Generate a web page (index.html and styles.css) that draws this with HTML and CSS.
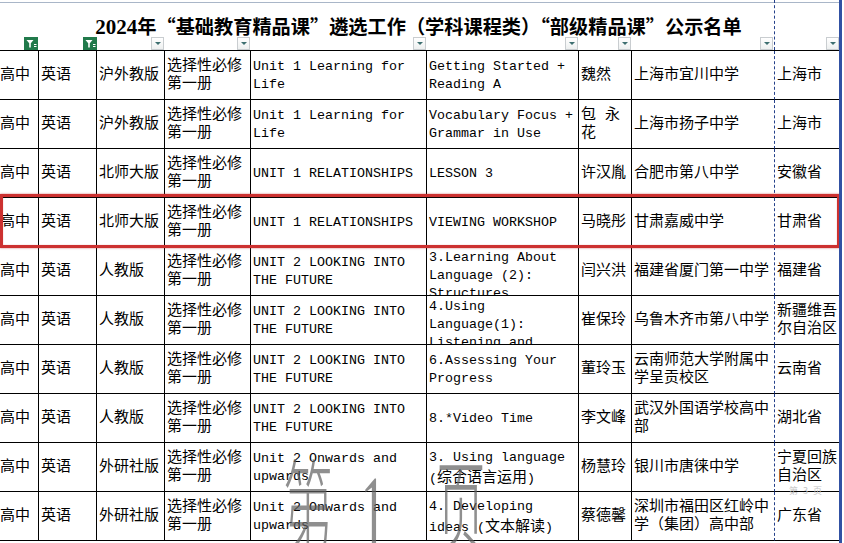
FILE: index.html
```html
<!DOCTYPE html>
<html lang="zh-CN">
<head>
<meta charset="utf-8">
<title>公示名单</title>
<link rel="stylesheet" href="styles.css">
</head>
<body>
<div class="sheet">
  <div class="head">
    <div class="title"><span class="yr">2024</span>年<span class="q">“</span>基础教育精品课<span class="q">”</span>遴选工作（学科课程类）<span class="q">“</span>部级精品课<span class="q">”</span>公示名单</div>
    <div class="hc"><svg class="flt" width="14" height="13" viewBox="0 0 14 13"><rect width="14" height="13" fill="#217a4b"/><polygon points="2.5,3 9.5,3 6.8,6.3 6.8,10.5 5.2,10.5 5.2,6.3" fill="#fff"/><rect x="10" y="7" width="2.5" height="1" fill="#fff"/><rect x="10" y="9" width="2.5" height="1" fill="#fff"/></svg></div>
    <div class="hc"><svg class="flt" width="14" height="13" viewBox="0 0 14 13"><rect width="14" height="13" fill="#217a4b"/><polygon points="2.5,3 9.5,3 6.8,6.3 6.8,10.5 5.2,10.5 5.2,6.3" fill="#fff"/><rect x="10" y="7" width="2.5" height="1" fill="#fff"/><rect x="10" y="9" width="2.5" height="1" fill="#fff"/></svg></div>
    <div class="hc"><span class="dd"></span></div>
    <div class="hc"><span class="dd"></span></div>
    <div class="hc"><span class="dd"></span></div>
    <div class="hc"><span class="dd"></span></div>
    <div class="hc"><span class="dd"></span></div>
    <div class="hc"><span class="dd"></span></div>
    <div class="hc"><span class="dd"></span></div>
  </div>
  <div class="grid">
    <div class="c">高中</div><div class="c">英语</div><div class="c">沪外教版</div><div class="c">选择性必修第一册</div><div class="c en">Unit 1 Learning for Life</div><div class="c en">Getting Started + Reading A</div><div class="c">魏然</div><div class="c">上海市宜川中学</div><div class="c">上海市</div>

    <div class="c">高中</div><div class="c">英语</div><div class="c">沪外教版</div><div class="c">选择性必修第一册</div><div class="c en">Unit 1 Learning for Life</div><div class="c en">Vocabulary Focus + Grammar in Use</div><div class="c">包 永花</div><div class="c">上海市扬子中学</div><div class="c">上海市</div>

    <div class="c">高中</div><div class="c">英语</div><div class="c">北师大版</div><div class="c">选择性必修第一册</div><div class="c en">UNIT 1 RELATIONSHIPS</div><div class="c en">LESSON 3</div><div class="c">许汉胤</div><div class="c">合肥市第八中学</div><div class="c">安徽省</div>

    <div class="c">高中</div><div class="c">英语</div><div class="c">北师大版</div><div class="c">选择性必修第一册</div><div class="c en">UNIT 1 RELATIONSHIPS</div><div class="c en">VIEWING WORKSHOP</div><div class="c">马晓彤</div><div class="c">甘肃嘉威中学</div><div class="c">甘肃省</div>

    <div class="c">高中</div><div class="c">英语</div><div class="c">人教版</div><div class="c">选择性必修第一册</div><div class="c en">UNIT 2 LOOKING INTO THE FUTURE</div><div class="c en top">3.Learning About Language (2): Structures</div><div class="c">闫兴洪</div><div class="c">福建省厦门第一中学</div><div class="c">福建省</div>

    <div class="c">高中</div><div class="c">英语</div><div class="c">人教版</div><div class="c">选择性必修第一册</div><div class="c en">UNIT 2 LOOKING INTO THE FUTURE</div><div class="c en top">4.Using Language(1): Listening and Speaking</div><div class="c">崔保玲</div><div class="c">乌鲁木齐市第八中学</div><div class="c">新疆维吾尔自治区</div>

    <div class="c">高中</div><div class="c">英语</div><div class="c">人教版</div><div class="c">选择性必修第一册</div><div class="c en">UNIT 2 LOOKING INTO THE FUTURE</div><div class="c en">6.Assessing Your Progress</div><div class="c">董玲玉</div><div class="c">云南师范大学附属中学呈贡校区</div><div class="c">云南省</div>

    <div class="c">高中</div><div class="c">英语</div><div class="c">人教版</div><div class="c">选择性必修第一册</div><div class="c en">UNIT 2 LOOKING INTO THE FUTURE</div><div class="c en">8.*Video Time</div><div class="c">李文峰</div><div class="c">武汉外国语学校高中部</div><div class="c">湖北省</div>

    <div class="c">高中</div><div class="c">英语</div><div class="c">外研社版</div><div class="c">选择性必修第一册</div><div class="c en">Unit 2 Onwards and upwards</div><div class="c en"><span>3. Using language (<span class="cj">综合语言运用</span>)</span></div><div class="c">杨慧玲</div><div class="c">银川市唐徕中学</div><div class="c">宁夏回族自治区</div>

    <div class="c">高中</div><div class="c">英语</div><div class="c">外研社版</div><div class="c">选择性必修第一册</div><div class="c en">Unit 2 Onwards and upwards</div><div class="c en"><span>4. Developing ideas (<span class="cj">文本解读</span>)</span></div><div class="c">蔡德馨</div><div class="c">深圳市福田区红岭中学（集团）高中部</div><div class="c">广东省</div>
  </div>
  <div class="hl"></div>
  <div class="wm"><span class="w1">第</span><span class="w2">1</span><span class="w3">页</span></div>
  <div class="wm2">第 3 页</div>
</div>
</body>
</html>
```
FILE: styles.css
```css
* { box-sizing: border-box; }
html, body { margin: 0; padding: 0; background: #fff; overflow: hidden; }
body { width: 844px; height: 543px; color: #000; }

.sheet {
  position: relative;
  width: 842px;
  height: 543px;
  border-right: 3px solid #3151a3;
  overflow: hidden;
}

.head {
  display: grid;
  grid-template-columns: 39px 58px 68px 86px 176px 152px 53px 143px 64px;
  height: 50px;
  background: linear-gradient(#fff 0 2px, #a9b6c8 2px 3px, #fff 3px);
}
.title {
  grid-column: 1 / -1;
  grid-row: 1;
  align-self: start;
  padding-top: 15px;
  text-align: center;
  font-family: "Liberation Serif", "Noto Sans CJK SC", serif;
  font-weight: 700;
  font-size: 19.2px;
  line-height: 22px;
  white-space: nowrap;
  padding-right: 2px;
}
.title .yr { font-size: 21px; }
.title .q { font-family: "Noto Sans CJK SC", sans-serif; }

.hc {
  grid-row: 1;
  display: flex;
  align-items: flex-end;
  justify-content: flex-end;
  padding-right: 1px;
}
.hc:nth-child(2) { grid-column: 1; }
.hc:nth-child(3) { grid-column: 2; padding-right: 0; }
.hc:nth-child(4) { grid-column: 3; }
.hc:nth-child(5) { grid-column: 4; }
.hc:nth-child(6) { grid-column: 5; }
.hc:nth-child(7) { grid-column: 6; }
.hc:nth-child(8) { grid-column: 7; }
.hc:nth-child(9) { grid-column: 8; border-right: 1px dashed #24408a; }
.hc:nth-child(10) { grid-column: 9; padding-right: 0; }
.flt { display: block; }
.dd {
  display: block;
  width: 13px;
  height: 13px;
  border: 1px solid #c9cdd0;
  background: linear-gradient(#ffffff, #eef0f0);
  position: relative;
}
.dd::after {
  content: "";
  position: absolute;
  left: 3px;
  top: 4px;
  border-left: 3px solid transparent;
  border-right: 3px solid transparent;
  border-top: 3px solid #3d6f70;
}

.grid {
  display: grid;
  grid-template-columns: 39px 58px 68px 86px 176px 152px 53px 143px 64px;
  grid-auto-rows: 49px;
  border-top: 1px solid #000;
}
.c {
  display: flex;
  align-items: center;
  padding: 2px 0 0 2px;
  border-right: 1px solid #000;
  border-bottom: 1px solid #000;
  overflow: hidden;
  font-family: "Liberation Mono", "Noto Sans CJK SC", monospace;
  font-size: 15px;
  line-height: 18px;
}
.c:nth-child(9n+1) { padding-left: 0; }
.c:nth-child(9n+8) { border-right: 1px dashed #24408a; }
.c:nth-child(9n) { border-right: none; }
.c.en { font-size: 13.33px; }
.c.top { align-items: flex-start; }
.cj { font-family: "Noto Sans CJK SC", sans-serif; font-size: 15px; }

.hl {
  position: absolute;
  left: 0;
  top: 194px;
  width: 840px;
  height: 54px;
  border: 3px solid #cc3130;
  box-shadow: 0 0 2px rgba(180, 30, 30, 0.6), inset 0 0 1px rgba(180, 30, 30, 0.6);
}

.wm {
  position: absolute;
  left: 283px;
  top: 450px;
  display: flex;
  align-items: baseline;
  font-family: "Liberation Serif", "Noto Sans CJK SC", serif;
  font-size: 104px;
  line-height: 104px;
  color: rgba(95, 95, 95, 0.7);
  transform: scaleX(0.48);
  transform-origin: 0 0;
  white-space: nowrap;
  pointer-events: none;
}
.wm .w1 { font-family: "Noto Sans CJK SC", sans-serif; font-weight: 300; }
.wm .w2 { margin-left: 58px; }
.wm .w3 { margin-left: 104px; font-family: "Noto Sans CJK SC", sans-serif; font-weight: 300; }

.wm2 {
  position: absolute;
  left: 789px;
  top: 486px;
  font-family: "Noto Sans CJK SC", sans-serif;
  font-size: 9px;
  line-height: 10px;
  color: #c4c4c4;
  word-spacing: 3px;
}
```
